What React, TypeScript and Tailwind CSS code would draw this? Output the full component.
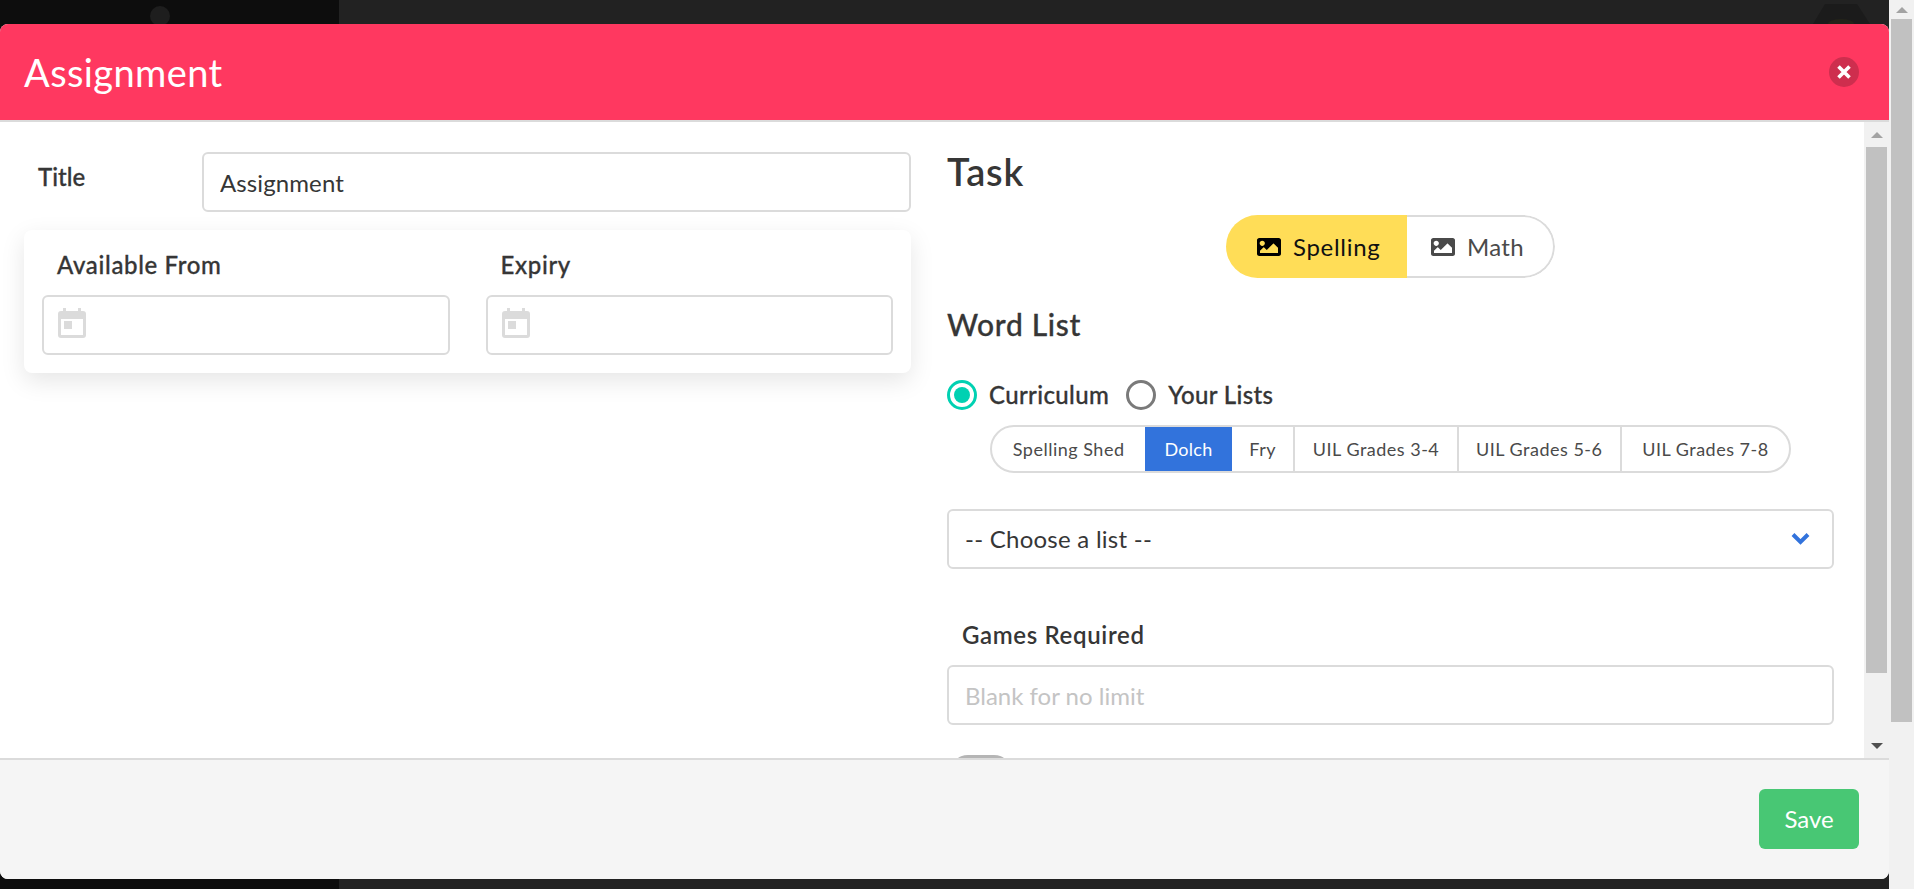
import React from "react";
import { FaImage } from "react-icons/fa";

const fieldClass =
  "h-[60px] w-full rounded-[6px] border-2 border-[#dbdbdb] bg-white px-4 text-[24px] text-[#363636] outline-none placeholder:text-[#c4c4c4]";

const lists = [
  { name: "Spelling Shed", width: "w-[154px]" },
  { name: "Dolch", width: "w-[87px]", active: true },
  { name: "Fry", width: "w-[64px]" },
  { name: "UIL Grades 3-4", width: "w-[164px]" },
  { name: "UIL Grades 5-6", width: "w-[164px]" },
  { name: "UIL Grades 7-8", width: "w-[168px]" },
];

function CalendarIcon() {
  return (
    <svg viewBox="0 0 28 30" className="h-[30px] w-[28px] shrink-0" fill="#dbdbdb">
      <path d="M5 0h3v3h12V0h3v3h2a3 3 0 0 1 3 3v21a3 3 0 0 1-3 3H3a3 3 0 0 1-3-3V6a3 3 0 0 1 3-3h2V0zM3 11v16h22V11H3z" />
      <rect x="6" y="13" width="8" height="8" />
    </svg>
  );
}

function ScrollArrow({ down, color }: { down?: boolean; color: string }) {
  return (
    <svg viewBox="0 0 12 6" className="h-[6px] w-[12px]" fill={color}>
      <polygon points={down ? "0,0 12,0 6,6" : "6,0 12,6 0,6"} />
    </svg>
  );
}

function DateField({ label }: { label: string }) {
  return (
    <div>
      <div className="mb-[15px] pl-[15px] text-[24px] leading-[30px] font-medium tracking-[0.65px] text-[#363636] [-webkit-text-stroke:0.3px_#363636]">
        {label}
      </div>
      <div className="flex h-[60px] items-center rounded-[6px] border-2 border-[#dbdbdb] bg-white pb-[4px] pl-[14px]">
        <CalendarIcon />
      </div>
    </div>
  );
}

function Radio({ label, checked }: { label: string; checked?: boolean }) {
  return (
    <div className="flex items-center gap-[12px]">
      <div
        className={
          checked
            ? "flex h-[30px] w-[30px] items-center justify-center rounded-full border-[3px] border-[#00d1b2]"
            : "h-[30px] w-[30px] rounded-full border-[3px] border-[#7a7a7a]"
        }
      >
        {checked && <div className="h-[16px] w-[16px] rounded-full bg-[#00d1b2]" />}
      </div>
      <span className="text-[24px] leading-[30px] font-medium tracking-[0.36px] text-[#363636] [-webkit-text-stroke:0.3px_#363636]">
        {label}
      </span>
    </div>
  );
}

export default function App() {
  return (
    <div className="flex h-screen w-full overflow-hidden font-['Lato','Liberation_Sans',sans-serif]">
      <div className="relative flex-1 bg-[#222222]">
        {/* page behind the modal */}
        <div className="h-full w-[339px] bg-[#0d0d0d]" />
        <div className="absolute top-[6px] left-[150px] h-[20px] w-[20px] rounded-full bg-[#1e1e1e]" />
        <svg viewBox="0 0 57 20" className="absolute top-[4px] right-[19px] h-[20px] w-[57px]" fill="#1b1b1b">
          <polygon points="12,0 44,0 57,20 0,20" />
          <ellipse cx="28" cy="20" rx="13" ry="5" fill="#23231a" />
        </svg>

        {/* modal */}
        <div className="absolute inset-x-0 top-[24px] bottom-[10px] flex flex-col overflow-hidden rounded-[8px] bg-white">
          <header className="flex h-[98px] shrink-0 items-center justify-between border-b-2 border-[#dbdbdb] bg-[#ff3860] pr-[30px] pl-6">
            <h1 className="text-[38px] leading-[44px] tracking-[0.4px] text-white">Assignment</h1>
            <button className="flex h-[30px] w-[30px] items-center justify-center rounded-full bg-[#0a0a0a]/20">
              <svg viewBox="0 0 14 14" className="h-[14px] w-[14px]" stroke="white" strokeWidth="3.6">
                <path d="M1.5 1.5l11 11M12.5 1.5l-11 11" />
              </svg>
            </button>
          </header>

          <div className="flex min-h-0 flex-1">
            <div className="flex min-w-0 flex-1 gap-9 overflow-hidden px-6">
              {/* settings */}
              <section className="w-[887px] shrink-0 pt-[30px]">
                <div className="flex">
                  <label className="w-[178px] shrink-0 pl-[14px] text-[24px] leading-[50px] font-medium text-[#363636] [-webkit-text-stroke:0.3px_#363636]">
                    Title
                  </label>
                  <input className={`${fieldClass} tracking-[0.1px]`} defaultValue="Assignment" />
                </div>
                <div className="mt-[18px] grid h-[143px] grid-cols-2 gap-[36px] rounded-[8px] bg-white px-[18px] pt-5 shadow-[0_8px_24px_rgba(10,10,10,0.1)]">
                  <DateField label="Available From" />
                  <DateField label="Expiry" />
                </div>
              </section>

              {/* task */}
              <section className="w-[887px] shrink-0 pt-[27px]">
                <h2 className="text-[38px] leading-[44px] font-semibold tracking-[0.8px] text-[#363636]">Task</h2>

                <div className="mt-[22px] flex justify-center">
                  <div className="flex h-[63px] overflow-hidden rounded-full">
                    <div className="flex w-[181px] items-center gap-3 bg-[#ffdd57] pl-[31px] text-[24px] tracking-[0.7px] text-[#111111]">
                      <FaImage className="h-[24px] w-[24px] text-black" />
                      Spelling
                    </div>
                    <div className="flex w-[148px] items-center gap-3 rounded-r-full border-y-2 border-r-2 border-[#dbdbdb] pl-[24px] text-[24px] tracking-[0.3px] text-[#4a4a4a]">
                      <FaImage className="h-[24px] w-[24px]" />
                      Math
                    </div>
                  </div>
                </div>

                <h3 className="mt-[28px] text-[30px] leading-[36px] font-medium tracking-[0.65px] text-[#363636] [-webkit-text-stroke:0.3px_#363636]">
                  Word List
                </h3>

                <div className="mt-[38px] flex gap-[17px]">
                  <Radio label="Curriculum" checked />
                  <Radio label="Your Lists" />
                </div>

                <div className="mt-[15px] ml-[43px] flex h-[48px] w-[801px] overflow-hidden rounded-full border-2 border-[#dbdbdb]">
                  {lists.map((item, idx) => (
                    <div
                      key={item.name}
                      className={
                        item.active
                          ? `-my-[2px] flex ${item.width} items-center justify-center bg-[#3273dc] text-[18px] tracking-[0.24px] text-white`
                          : `flex ${item.width} items-center justify-center text-[18px] tracking-[0.5px] text-[#4a4a4a] ${idx > 1 ? "border-r-2 border-[#dbdbdb] last:border-r-0" : ""}`
                      }
                    >
                      {item.name}
                    </div>
                  ))}
                </div>

                <div className="relative mt-[36px]">
                  <select className={`${fieldClass} appearance-none tracking-[0.25px]`} defaultValue="">
                    <option value="">-- Choose a list --</option>
                  </select>
                  <svg
                    viewBox="0 0 19 13"
                    className="pointer-events-none absolute top-[23px] right-[24px] h-[13px] w-[19px]"
                    fill="none"
                    stroke="#3273dc"
                    strokeWidth="4"
                  >
                    <path d="M2 2.5l7.5 7.5L17 2.5" />
                  </svg>
                </div>

                <div className="mt-[51px] ml-[15px] text-[24px] leading-[30px] font-semibold tracking-[0.65px] text-[#363636]">
                  Games Required
                </div>
                <input className={`${fieldClass} mt-[15px]`} placeholder="Blank for no limit" />

                <div className="mt-[30px] ml-[3px] h-[36px] w-[62px] rounded-full bg-[#b5b5b5]" />
              </section>
            </div>

            {/* modal scrollbar */}
            <div className="flex w-[25px] shrink-0 flex-col items-center bg-[#f1f1f1]">
              <div className="flex h-[25px] items-center justify-center">
                <ScrollArrow color="#a3a3a3" />
              </div>
              <div className="h-[526px] w-[21px] bg-[#c1c1c1]" />
              <div className="flex-1" />
              <div className="flex h-[25px] items-center justify-center">
                <ScrollArrow down color="#505050" />
              </div>
            </div>
          </div>

          <footer className="flex h-[121px] shrink-0 justify-end border-t-2 border-[#dbdbdb] bg-[#f5f5f5] pt-[29px] pr-[30px]">
            <button className="h-[60px] w-[100px] rounded-[6px] bg-[#48c774] text-[24px] text-white">Save</button>
          </footer>
        </div>
      </div>

      {/* page scrollbar */}
      <div className="flex w-[25px] shrink-0 flex-col items-center bg-[#f1f1f1]">
        <div className="flex h-[19px] items-center justify-center">
          <ScrollArrow color="#a3a3a3" />
        </div>
        <div className="h-[703px] w-[21px] bg-[#c1c1c1]" />
      </div>
    </div>
  );
}
